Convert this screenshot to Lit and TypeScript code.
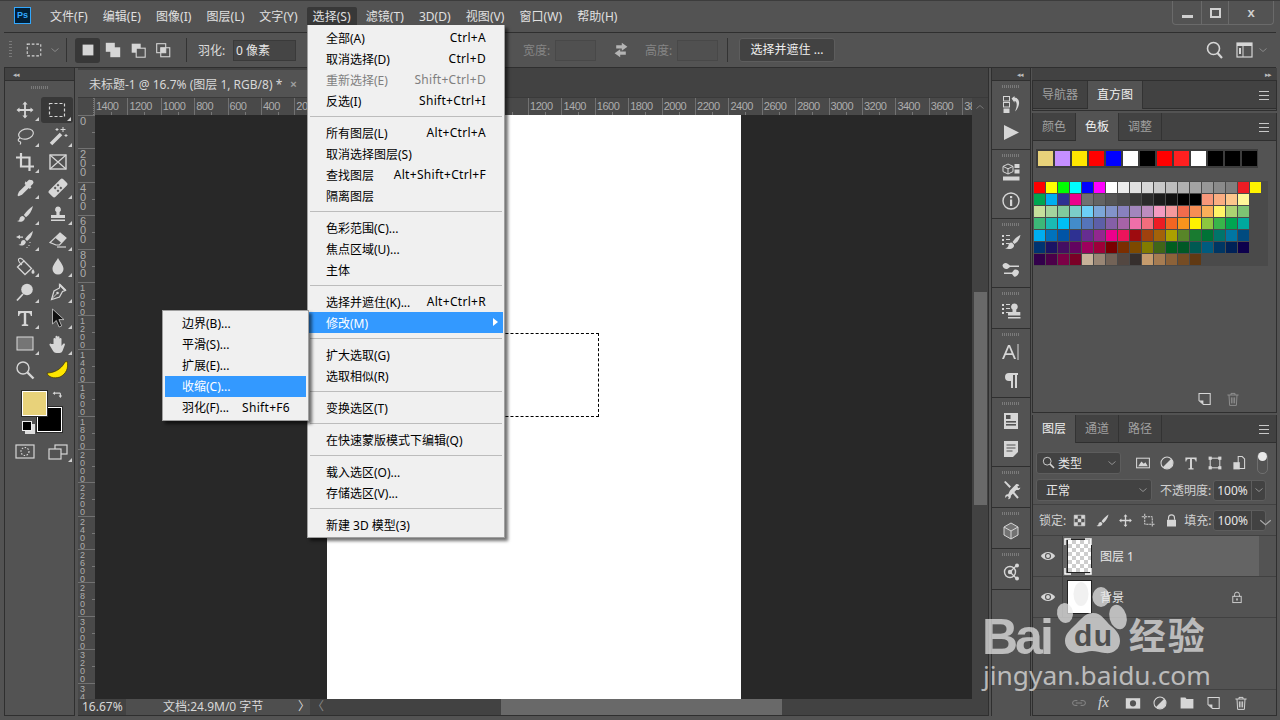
import { LitElement, html, css, svg } from 'lit';
import { customElement } from 'lit/decorators.js';

const icons: Record<string, unknown> = {
  move: svg`<path d="M10 1.5l2.6 3h-1.7v4.6h4.6V7.4l3 2.6-3 2.6v-1.7h-4.6v4.6h1.7l-2.6 3-2.6-3h1.7v-4.6H4.5v1.7l-3-2.6 3-2.6v1.7h4.6V4.5H7.4z"/>`,
  marquee: svg`<rect x="2.5" y="3.5" width="15" height="13" fill="none" stroke="currentColor" stroke-width="1.2" stroke-dasharray="3 2"/>`,
  lasso: svg`<ellipse cx="11" cy="8" rx="7.5" ry="5" transform="rotate(-15 11 8)" fill="none" stroke="currentColor" stroke-width="1.2"/><path d="M5 12c-2 1-2.5 3-.5 3.5 1.5.4 1.5 1.5.5 3" fill="none" stroke="currentColor" stroke-width="1.2"/>`,
  wand: svg`<path d="M3 18L13 8" stroke="currentColor" stroke-width="3.6" fill="none"/><path d="M15 1v5M12.5 3.5h5M9 2v3M7.5 3.5h3M18 8v3M16.5 9.5h3" stroke="currentColor" stroke-width="1"/>`,
  crop: svg`<path d="M6 1v13.5h13M1 5.5h13.5V19" fill="none" stroke="currentColor" stroke-width="2.2"/>`,
  frame: svg`<rect x="2" y="3" width="16" height="14" fill="none" stroke="currentColor" stroke-width="1.4"/><path d="M2 3l16 14M18 3L2 17" stroke="currentColor" stroke-width="1.2"/>`,
  dropper: svg`<path d="M15.5 2a2.4 2.4 0 0 1 2.3 4l-2.3 2.3 1 1-1.7 1.7-1-1-6.8 6.8-3.5 1.4-1-1 1.4-3.5 6.8-6.8-1-1L10.4 3.2l1 1L13.7 2c.5-.2 1.2-.2 1.8 0z"/>`,
  bandage: svg`<g transform="rotate(-45 10 10)"><rect x="0" y="5.5" width="20" height="9" rx="2"/><rect x="7" y="7" width="2" height="2" fill="#535353"/><rect x="11" y="7" width="2" height="2" fill="#535353"/><rect x="7" y="11" width="2" height="2" fill="#535353"/><rect x="11" y="11" width="2" height="2" fill="#535353"/></g>`,
  brush: svg`<path d="M18 2c-3 2-7 5.5-9.2 9l2.2 2.2C14 11 17 7 18 2z"/><path d="M7.8 12C5.8 12 4.5 13.5 4.5 15c0 1-1 2-2.5 2 2 1.5 6.5 1 7.7-2 .4-1.2-.2-2.2-1.9-3z"/>`,
  stamp: svg`<path d="M10 2.5a3 3 0 0 1 1.6 5.5V11h5.4v3H3v-3h5.4V8A3 3 0 0 1 10 2.5z"/><rect x="3" y="15.5" width="14" height="1.5"/>`,
  hbrush: svg`<path d="M18 1c-3 2-6 5-8 8l2 2c3-2 5-5 6-10z"/><path d="M9 10c-2 0-3 1.3-3 2.7 0 1-.8 2-2.5 2 2 1.5 6 1 7.2-2 .3-1-.1-2-1.7-2.7z"/><path d="M1 7l4-2v1.4h3v1.3H5V9z"/><path d="M15 12v1M14 15v1M12 17v1" stroke="currentColor" stroke-width="1"/>`,
  eraser: svg`<path d="M12 3l6 5-6.5 7H8L2 12.5z" fill="none" stroke="currentColor" stroke-width="1.2"/><path d="M12 3l6 5-4.5 5-6-5z"/><path d="M9 17h9" stroke="currentColor" stroke-width="1.2"/>`,
  bucket: svg`<path d="M9 5l7.5 7.5L10 18.5 2.5 11z" fill="none" stroke="currentColor" stroke-width="1.3"/><path d="M9 5C7 2 4 1.5 3.5 3.5S6 8 7 9" fill="none" stroke="currentColor" stroke-width="1.1"/><path d="M18 13c1 1.5 1.5 2.4 1.5 3.2a1.5 1.5 0 0 1-3 0c0-.8.5-1.7 1.5-3.2z"/>`,
  drop: svg`<path d="M10 2c2.7 4.6 5.5 7.5 5.5 11a5.5 5.5 0 0 1-11 0C4.5 9.5 7.3 6.6 10 2z"/>`,
  dodge: svg`<circle cx="12" cy="7.5" r="5.8"/><path d="M8 12L2 18.5" stroke="currentColor" stroke-width="1.8"/>`,
  pen: svg`<path d="M11.5 2.5l6 6-3 1-3 5.5-8 2.5 2.5-8.5 5.5-3z" fill="none" stroke="currentColor" stroke-width="1.2"/><path d="M3.5 17l5-5" stroke="currentColor"/><circle cx="9.5" cy="11" r="1.3"/><path d="M11.5 2.5l6 6" stroke="currentColor" stroke-width="2"/>`,
  type: svg`<path d="M3 3h14v5h-1.2c-.3-2-1-3-3-3H11.2v10.5c0 .8.5 1 2 1V18H6.8v-1.5c1.5 0 2-.2 2-1V5H7.2c-2 0-2.7 1-3 3H3z"/>`,
  arrow: svg`<path d="M4.5 1v15l3.8-3.5 2.8 6.5 2.6-1.1-2.8-6.3h5.1z" fill="#111" stroke="#cfcfcf" stroke-width=".8"/>`,
  rect: svg`<rect x="2" y="3" width="16" height="13" fill="#757575" stroke="#dcdcdc" stroke-width="1"/>`,
  hand: svg`<path d="M5.5 10V5a1 1 0 0 1 2 0v4V2.8a1 1 0 0 1 2 0V9V3.2a1 1 0 0 1 2 0V9V5a1 1 0 0 1 2 0v7l1.7-2.2a1 1 0 0 1 1.7 1L14.5 17c-.6 1-1.5 2-3 2H8.5c-2 0-3-1-4-3L1.5 11a1 1 0 0 1 1.7-1z"/>`,
  zoom: svg`<circle cx="8" cy="8" r="6" fill="none" stroke="currentColor" stroke-width="1.4"/><path d="M12.5 12.5L18.5 18.5" stroke="currentColor" stroke-width="2.4"/>`,
  swap: svg`<path d="M1 7l4-3v2h7c2 0 3 1 3 3v2h2l-3 4-3-4h2V9c0-.8-.3-1-1-1H5v2z"/>`,
  history: svg`<rect x="2.5" y="2.5" width="6" height="4.5" fill="none" stroke="currentColor"/><rect x="2.5" y="8.5" width="6" height="4.5" fill="none" stroke="currentColor"/><rect x="2.5" y="14.5" width="6" height="4.5"/><path d="M10.5 4.5l3-2.5v1.6c3.5.2 5 3 4.5 6.5-.4 3-2 5.5-4 7.5 1-2.4 1.8-5 1.7-7.2 0-2-.8-3.3-2.2-3.5v1.8z"/>`,
  play: svg`<path d="M3 3l15 7.5L3 18z"/>`,
  cube: svg`<path d="M7 1l5 2.4v5.2L7 11 2 8.6V3.4z" fill="none" stroke="currentColor"/><path d="M2 3.4l5 2.4 5-2.4M7 5.8V11" fill="none" stroke="currentColor"/><rect x="13.5" y="1" width="5" height="4"/><rect x="13.5" y="6.5" width="5" height="4"/><rect x="2" y="13.5" width="16.5" height="4"/>`,
  info: svg`<circle cx="10" cy="10" r="8" fill="none" stroke="currentColor" stroke-width="1.4"/><rect x="9" y="8.5" width="2.2" height="6.5"/><rect x="9" y="5" width="2.2" height="2.2"/>`,
  bpreset: svg`<rect x="1" y="3" width="2" height="2"/><rect x="1" y="7" width="2" height="2"/><rect x="1" y="11" width="2" height="2"/><path d="M5 3.5h4M5 7.5h4M5 11.5h3" stroke="currentColor"/><path d="M19.5 3c-3 1-6 4-8 7l2 2c3-1.5 5-5 6-9z"/><path d="M10.5 10.5c-2 0-3 1.3-3 2.7 0 1.3-1.5 2.8-3.5 3 3 1.5 8 1 9-2 .3-1.5-.8-3-2.5-3.7z"/>`,
  bsettings: svg`<path d="M1.5 5.5C2 3 5 2 7 4l2 1.5h9V7H9L7 8.5C5 10 2 8.5 1.5 5.5z"/><path d="M18 12c-.5 3-3 5.5-5 4.5L11 14H3v-1.5h8l2-2.5c2-1 4.5 0 5 2z"/>`,
  clone: svg`<rect x="1" y="3" width="2" height="2"/><rect x="1" y="7" width="2" height="2"/><rect x="1" y="11" width="2" height="2"/><path d="M5 3.5h4M5 7.5h4M5 11.5h2" stroke="currentColor"/><path d="M13.5 2.5a3.3 3.3 0 0 1 1.8 6V11h4v3.5H7V11h4.5V8.5a3.3 3.3 0 0 1 2-6z"/><rect x="7" y="16" width="12.5" height="1.5"/>`,
  char: svg`<path d="M1 17L7 3h2l6 14h-2l-1.7-4H4.7L3 17zM5.400 11.200h5.200L8 5z"/><rect x="16.5" y="2" width="1" height="16"/>`,
  para: svg`<path d="M8 3h9v2h-1v13h-2V5h-2v13h-2v-7H8a4 4 0 0 1 0-8z"/>`,
  lib: svg`<path d="M3 2h14v16H3z"/><rect x="5" y="4" width="4.5" height="4" fill="#535353"/><rect x="5" y="10" width="10" height="1.6" fill="#535353"/><rect x="5" y="13" width="10" height="1.6" fill="#535353"/>`,
  note: svg`<path d="M3 2h14v11l-5 5H3z"/><path d="M5.5 6h9M5.5 9h9M5.5 12h6" stroke="#535353"/>`,
  tools: svg`<path d="M3 2l5.5 6L10 6.500 4.500 1zM9 10.500L15 4.200c1.200-.8 3 0 3.300 1.400l-2 .9 1 1.700 2-.7c0 1.700-1.800 3.200-4 2.400L9.800 15.800c.5 2-.9 3.500-2.700 3.500l.7-2.200-1.700-1-1.600 1.800C3.500 16 5 13.800 7.200 14.300z" fill-rule="evenodd"/><path d="M11 11l6 7" stroke="currentColor" stroke-width="2"/>`,
  box: svg`<path d="M10 2l7 4v8l-7 4-7-4V6z" fill="#737373" stroke="currentColor"/><path d="M3 6l7 4 7-4M10 10v8" fill="none" stroke="currentColor"/>`,
  measure: svg`<circle cx="9" cy="10" r="5.5" fill="none" stroke="currentColor" stroke-width="1.4"/><circle cx="9" cy="10" r="2.2"/><path d="M9 10l7-7M9 10l7 7" stroke="currentColor" stroke-width="1.3"/><circle cx="16" cy="3.5" r="2"/><circle cx="16" cy="16.5" r="2"/>`,
  search: svg`<circle cx="8.5" cy="8.5" r="6" fill="none" stroke="currentColor" stroke-width="1.6"/><path d="M12.5 13l4.5 5" stroke="currentColor" stroke-width="2.2"/>`,
  workspace: svg`<rect x="2" y="3" width="15" height="14" fill="none" stroke="currentColor" stroke-width="1.2"/><rect x="2" y="3" width="15" height="3"/><path d="M8 6v11" stroke="currentColor"/><rect x="4" y="8" width="2" height="6"/>`,
  chev: svg`<path d="M3 7l7 6 7-6" fill="none" stroke="currentColor" stroke-width="1.5"/>`,
  swapH: svg`<path d="M11 1l7 5-7 5V8H4V4h7z"/><path d="M9 9l-7 5 7 5v-3h7v-4H9z"/>`,
  sqA: svg`<rect x="4" y="4" width="12" height="12"/>`,
  sqB: svg`<rect x="2" y="2" width="10" height="10"/><rect x="7" y="7" width="11" height="11"/>`,
  sqC: svg`<rect x="3" y="3" width="10" height="10"/><rect x="8" y="8" width="10" height="10" fill="#535353" stroke="currentColor" stroke-width="1.2"/>`,
  sqD: svg`<rect x="3" y="3" width="10" height="10" fill="none" stroke="currentColor" stroke-width="1.2"/><rect x="7.5" y="7.5" width="10" height="10" fill="none" stroke="currentColor" stroke-width="1.2"/><rect x="7.5" y="7.5" width="5.5" height="5.5"/>`,
  qmask: svg`<rect x="1" y="3" width="18" height="13" fill="none" stroke="currentColor" stroke-width="1.2"/><circle cx="10" cy="9.5" r="4" fill="none" stroke="currentColor" stroke-width="1.2" stroke-dasharray="1.5 1.5"/>`,
  screen: svg`<rect x="7" y="3" width="12" height="9" fill="none" stroke="currentColor" stroke-width="1.2"/><rect x="1" y="7" width="12" height="10" fill="#535353" stroke="currentColor" stroke-width="1.2"/>`,
  newp: svg`<path d="M2.5 3h14v14H8l-5.5-5z" fill="none" stroke="currentColor" stroke-width="1.3"/><path d="M3 12h5v5z"/>`,
  trash: svg`<path d="M3 5h14M7.5 5V3h5v2M5 5l.8 13h8.400L15 5M8 8v7.500M10 8v7.500M12 8v7.500" fill="none" stroke="currentColor" stroke-width="1.2"/>`,
  eye: svg`<path d="M1 10c2.5-3.5 5.5-5 9-5s6.500 1.500 9 5c-2.500 3.500-5.500 5-9 5s-6.500-1.500-9-5z"/><circle cx="10" cy="10" r="3.8" fill="#535353"/><circle cx="10" cy="10" r="2.4"/>`,
  lock: svg`<path d="M6 9V6.5a4 4 0 0 1 8 0V9" fill="none" stroke="currentColor" stroke-width="1.5"/><rect x="4" y="9" width="12" height="9"/>`,
  lockO: svg`<path d="M6.5 9V6.5a3.5 3.5 0 0 1 7 0V9" fill="none" stroke="currentColor" stroke-width="1.3"/><rect x="4" y="9" width="12" height="9" fill="none" stroke="currentColor" stroke-width="1.3"/><rect x="9" y="12" width="2" height="3"/>`,
  image: svg`<rect x="2" y="4" width="16" height="12" fill="none" stroke="currentColor" stroke-width="1.3"/><path d="M4 14l4-6 3 3 2-2 3 5z"/>`,
  adjust: svg`<circle cx="10" cy="10" r="7.5" fill="none" stroke="currentColor" stroke-width="1.3"/><path d="M15.3 4.7A7.5 7.5 0 0 1 4.7 15.3z"/>`,
  shape: svg`<rect x="4" y="4" width="12" height="12" fill="none" stroke="currentColor" stroke-width="1.3"/><rect x="2" y="2" width="4" height="4"/><rect x="14" y="2" width="4" height="4"/><rect x="2" y="14" width="4" height="4"/><rect x="14" y="14" width="4" height="4"/>`,
  smart: svg`<path d="M9 2h5l3 3v12H9z" fill="none" stroke="currentColor" stroke-width="1.3"/><rect x="3" y="9" width="8" height="9"/>`,
  check: svg`<path d="M3 3h14v14H3z" fill="none" stroke="currentColor"/><path d="M3 3h4.7v4.7H3zM12.3 3H17v4.7h-4.7zM7.7 7.7h4.6v4.6H7.7zM3 12.3h4.7V17H3zM12.3 12.3H17V17h-4.7z"/>`,
  artboard: svg`<path d="M5 1v14h14M1 5h14v14" fill="none" stroke="currentColor" stroke-width="1.3" stroke-dasharray="3 1"/>`,
  link: svg`<path d="M8 7H5a3 3 0 0 0 0 6h3M12 7h3a3 3 0 0 1 0 6h-3M6 10h8" fill="none" stroke="currentColor" stroke-width="1.2"/>`,
  maskI: svg`<rect x="1" y="4" width="18" height="13"/><circle cx="10" cy="10.5" r="3.8" fill="#535353"/>`,
  folder: svg`<path d="M2 3h6l1.5 2H18v12H2z"/>`,
};

const ic = (name: string, cls = '') =>
  html`<svg class="ic ${cls}" viewBox="0 0 20 20" fill="currentColor">${icons[name]}</svg>`;

const MENUBAR = ['文件(F)', '编辑(E)', '图像(I)', '图层(L)', '文字(Y)', '选择(S)', '滤镜(T)', '3D(D)', '视图(V)', '窗口(W)', '帮助(H)'];

const TOOLS = [
  ['move', 'more'], ['marquee', 'sel more'], ['lasso', 'more'], ['wand', 'more'],
  ['crop', 'more'], ['frame', ''], ['dropper', 'more'], ['bandage', 'more'],
  ['brush', 'more'], ['stamp', 'more'], ['hbrush', 'more'], ['eraser', 'more'],
  ['bucket', 'more'], ['drop', 'more'], ['dodge', 'more'], ['pen', 'more'],
  ['type', 'more'], ['arrow', 'more'], ['rect', 'more'], ['hand', 'more'], ['zoom', ''],
];

type Item = { t?: string; k?: string; off?: boolean; on?: boolean; sub?: boolean };

const MAIN_MENU: Item[] = [
  { t: '全部(A)', k: 'Ctrl+A' }, { t: '取消选择(D)', k: 'Ctrl+D' }, { t: '重新选择(E)', k: 'Shift+Ctrl+D', off: true }, { t: '反选(I)', k: 'Shift+Ctrl+I' }, {},
  { t: '所有图层(L)', k: 'Alt+Ctrl+A' }, { t: '取消选择图层(S)' }, { t: '查找图层', k: 'Alt+Shift+Ctrl+F' }, { t: '隔离图层' }, {},
  { t: '色彩范围(C)...' }, { t: '焦点区域(U)...' }, { t: '主体' }, {},
  { t: '选择并遮住(K)...', k: 'Alt+Ctrl+R' }, { t: '修改(M)', on: true, sub: true }, {},
  { t: '扩大选取(G)' }, { t: '选取相似(R)' }, {},
  { t: '变换选区(T)' }, {},
  { t: '在快速蒙版模式下编辑(Q)' }, {},
  { t: '载入选区(O)...' }, { t: '存储选区(V)...' }, {},
  { t: '新建 3D 模型(3)' },
];

const SUB_MENU: Item[] = [
  { t: '边界(B)...' }, { t: '平滑(S)...' }, { t: '扩展(E)...' }, { t: '收缩(C)...', on: true }, { t: '羽化(F)...', k: 'Shift+F6' },
];

const RECENT = ['#e8d27a', '#c58fff', '#ffe600', '#ff0000', '#0000ff', '#ffffff', '#000000', '#ff0000', '#ff2020', '#ffffff', '#000000', '#000000', '#000000'];

const SWATCHES = [
  '#ff0000 #ffff00 #00ff00 #00ffff #0000ff #ff00ff #ffffff #ebebeb #e1e1e1 #d7d7d7 #c8c8c8 #bdbdbd #b0b0b0 #a4a4a4 #979797 #8a8a8a #7f7f7f #ed1c24 #fff200',
  '#00a651 #00aeef #2e3192 #ec008c #707070 #636363 #555555 #4a4a4a #3a3a3a #2b2b2b #1c1c1c #111111 #000000 #000000 #f7977a #fbad82 #fdc68c #fff799',
  '#c6df9c #a4d49d #81ca9d #7bcdc9 #6ccff7 #7ca6d8 #8293ca #8881be #a286bd #bc8dbf #f49bc1 #f5999d #f16c4d #f68e55 #fbaf5a #fff467 #acd372 #7dc473',
  '#3cb878 #1abbb4 #00bff3 #438cca #5574b9 #5d5fa8 #855fa8 #a763a8 #ee6fa9 #f26d7d #ed1c24 #f26522 #f7941d #fff200 #8dc63f #39b54a #00a651 #00a99d',
  '#00aeef #0072bc #0054a6 #2e3192 #662d91 #92278f #ec008c #ed145b #9e0b0f #a0410d #a36209 #aba000 #588528 #197b30 #007236 #00746b #0076a3 #004b80',
  '#003471 #1b1464 #440e62 #630460 #9e005d #9e0039 #790000 #7b2e00 #7d4900 #827b00 #406618 #005e20 #005826 #005952 #005b7f #003663 #002157 #0d004c',
  '#32004b #4b0049 #7b0046 #7a0026 #c7b299 #998675 #736357 #534741 #362f2d #c69c6d #a67c52 #8c6239 #754c24 #603913',
].map((r) => r.split(' '));

const DOCK = [
  ['history', 'play'], ['cube', 'info'], ['bpreset', 'bsettings'], ['clone'], ['char', 'para'], ['lib', 'note'], ['tools'], ['box'], ['measure'],
];

// labels from 0 to 1000 sit under the open menu, so they stay empty
const H_RULER: { v: number; hidden: boolean }[] = [];
for (let v = 1400; v >= 200; v -= 200) H_RULER.push({ v, hidden: false });
for (let v = 0; v <= 3800; v += 200) H_RULER.push({ v, hidden: v <= 1000 });
const V_RULER: number[] = [];
for (let v = 0; v <= 3400; v += 200) V_RULER.push(v);

@customElement('app-root')
export class AppRoot extends LitElement {
  static styles = css`
    :host {
      display: block;
      width: 1280px;
      height: 720px;
      overflow: hidden;
      font-family: "Noto Sans", "Noto Sans CJK SC", sans-serif;
      font-size: 12px;
      color: #e0e0e0;
    }
    .app {
      position: relative;
      width: 1280px;
      height: 720px;
      background: #535353;
      display: flex;
      flex-direction: column;
      overflow: hidden;
    }
    .ic { width: 20px; height: 20px; display: block; color: #d6d6d6; flex: none; }

    /* menu bar */
    .bar { height: 32px; display: flex; align-items: flex-start; flex: none; border-top: 1px solid #3c3c3c; box-sizing: border-box; }
    .logo {
      width: 15px; height: 15px; margin: 6px 0 0 14px; border: 1px solid #31a8ff; background: #001e36;
      color: #31a8ff; font: bold 9px/15px "Liberation Sans", sans-serif; text-align: center;
    }
    .menus { display: flex; gap: 3px; margin: 6px 0 0 13px; }
    .menus span { padding: 0 6px; height: 20px; line-height: 19px; white-space: nowrap; width: max-content; border-radius: 2px; letter-spacing: .06px; }
    .menus span.open { background: #383838; }
    .win {
      margin-left: auto; margin-right: 6px; width: 102px; height: 24px; display: flex; box-sizing: border-box;
      border: 1px solid #6a6a6a; border-top: 0; border-radius: 0 0 4px 4px;
    }
    .win i { display: flex; align-items: center; justify-content: center; border-left: 1px solid #6a6a6a; font-style: normal; }
    .win i:first-child { border: 0; width: 28px; }
    .win i:nth-child(2) { width: 26px; }
    .win i:last-child { flex: 1; font: bold 13px "Liberation Sans", sans-serif; color: #cfcfcf; }
    .win .min { width: 11px; height: 3px; background: #cfcfcf; margin-top: 7px; }
    .win .max { width: 7px; height: 6px; border: 2px solid #cfcfcf; }

    /* options bar */
    .opts {
      height: 36px; flex: none; display: flex; align-items: center; box-sizing: border-box;
      border-top: 1px solid #2f2f2f; border-bottom: 1px solid #2f2f2f; margin: 0 4px; padding-left: 5px; color: #dcdcdc;
    }
    .grip { width: 3px; height: 18px; background: repeating-linear-gradient(#7a7a7a 0 1px, transparent 1px 3px); flex: none; }
    .sep { width: 1px; height: 24px; background: #333; flex: none; }
    .opt-marquee { margin-left: 13px; width: 18px; height: 18px; }
    .opt-chev { margin-left: 7px; width: 10px; height: 10px; color: #999; }
    .sep-a { margin: 0 8px 0 6px; }
    .sq { width: 25px; height: 25px; display: flex; align-items: center; justify-content: center; flex: none; box-sizing: border-box; }
    .sq .ic { width: 18px; height: 18px; }
    .sq.on { background: #383838; border-radius: 3px; }
    .sep-b { margin: 0 11px; }
    .feather { width: 35px; white-space: nowrap; }
    .field {
      box-sizing: border-box; height: 21px; background: #454545; border: 1px solid #3a3a3a; flex: none; line-height: 19px; padding-left: 2px; color: #e6e6e6; white-space: nowrap;
    }
    .f-feather { width: 63px; }
    .dim { color: #858585; white-space: nowrap; }
    .f-dim { width: 41px; background: #505050; border-color: #484848; margin-left: 4px; }
    .w-label { margin-left: 227px; width: 28px; }
    .swap { margin-left: 17px; width: 16px; height: 16px; color: #b4b4b4; }
    .h-label { margin-left: 16px; width: 28px; }
    .sep-c { margin: 0 11px 0 9px; }
    .refine {
      width: 96px; height: 24px; background: #424242; border: 1px solid #5d5d5d; border-radius: 3px; box-sizing: border-box; text-align: center; line-height: 21px; color: #f0f0f0; white-space: nowrap;
    }
    .opt-search { margin-left: auto; width: 20px; height: 20px; }
    .opt-ws { margin-left: 10px; width: 20px; height: 20px; }
    .opt-chev2 { margin: 0 8px 0 3px; width: 10px; height: 10px; color: #999; }

    /* main */
    .main { flex: 1; display: flex; min-height: 0; padding-bottom: 4px; box-sizing: border-box; }
    .strip { height: 12px; background: #424242; display: flex; align-items: center; font-size: 7px; color: #bbb; letter-spacing: -1px; flex: none; border-bottom: 1px solid #2f2f2f; }

    /* left toolbar */
    .left { width: 71px; margin: 0 3px 0 4px; display: flex; flex-direction: column; flex: none; border-right: 1px solid #2f2f2f; border-left: 1px solid #2f2f2f; border-bottom: 1px solid #2f2f2f; box-sizing: border-box; }
    .left .strip { padding-left: 8px; }
    .left-grip { height: 3px; margin: 5px auto 8px; width: 18px; background: repeating-linear-gradient(90deg, #7a7a7a 0 1px, transparent 1px 2px); flex: none; }
    .tools { display: grid; grid-template-columns: 33px 33px; grid-auto-rows: 26px; padding-left: 3px; }
    .tool { position: relative; display: flex; align-items: center; justify-content: center; box-sizing: border-box; }
    .tool.sel { background: #383838; border-radius: 3px; margin-right: 1px; }
    .tool.more::after {
      content: ''; position: absolute; right: 2px; bottom: 2px; width: 0; height: 0;
      border-left: 4px solid transparent; border-bottom: 4px solid #cfcfcf;
    }
    .banana { width: 24px; height: 18px; }
    .colors { position: relative; height: 46px; margin: 6px 0 0 0; flex: none; }
    .fg, .bg { position: absolute; box-sizing: border-box; width: 25px; height: 25px; border: 1px solid #fff; box-shadow: 0 0 0 1px #2a2a2a; }
    .fg { left: 17px; top: 2px; background: #e8d27a; z-index: 1; }
    .bg { left: 32px; top: 18px; background: #000; }
    .cswap { position: absolute; left: 47px; top: 0; width: 12px; height: 12px; }
    .cdef { position: absolute; left: 17px; top: 32px; width: 10px; height: 10px; background: #000; border: 1px solid #eee; box-sizing: border-box; box-shadow: 3px 3px 0 #ddd; }
    .modes { display: grid; grid-template-columns: 33px 33px; padding-left: 3px; margin-top: 5px; flex: none; }
    .modes div { position: relative; display: flex; justify-content: center; height: 24px; align-items: center; }

    /* document */
    .doc { width: 911px; flex: none; display: flex; flex-direction: column; border-right: 1px solid #2f2f2f; box-sizing: border-box; }
    .tabs { height: 29px; background: #424242; flex: none; display: flex; align-items: flex-end; }
    .tab { width: 232px; height: 27px; background: #535353; display: flex; align-items: center; padding: 0 0 0 11px; box-sizing: border-box; white-space: nowrap; color: #d8d8d8; }
    .tab b { margin-left: 8px; font: bold 11px "Liberation Sans", sans-serif; color: #a0a0a0; }
    .hruler { height: 18px; flex: none; background: #494949; display: flex; border-top: 1px solid #3a3a3a; box-sizing: border-box; }
    .corner { width: 15px; flex: none; background: #494949; border-right: 1px dotted #777; }
    .hticks { flex: 1; min-width: 0; display: flex; overflow: hidden; }
    .hend { width: 16px; flex: none; background: #424242; display: flex; align-items: center; justify-content: center; }
    .hend .ic { width: 10px; height: 10px; color: #8a8a8a; transform: scaleY(-1); }
    .hcell {
      width: 33.4px; flex: none; box-sizing: border-box; border-left: 1px solid #717171; padding-left: 1px;
      font: 11px/17px "Liberation Sans", sans-serif; letter-spacing: -.5px; color: #adadad; position: relative;
    }
    .hcell::after { content: ''; position: absolute; left: 16px; bottom: 0; width: 1px; height: 3px; background: #777; }
    .mid { flex: 1; min-height: 0; display: flex; }
    .vruler { width: 17px; flex: none; background: #494949; overflow: hidden; }
    .vcell {
      height: 33.4px; box-sizing: border-box; border-top: 1px solid #717171; padding: 1px 0 0 2px; position: relative;
      font: 11px/9px "Liberation Sans", sans-serif; color: #adadad; display: flex; flex-direction: column;
    }
    .vcell.long { font-size: 9px; line-height: 8px; }
    .vcell::after { content: ''; position: absolute; right: 0; top: 16px; width: 3px; height: 1px; background: #777; }
    .canvas { flex: 1; background: #282828; position: relative; overflow: hidden; }
    .page { position: absolute; left: 232px; top: 0; width: 414px; height: 100%; background: #fff; }
    .ants { position: absolute; left: 340px; top: 218px; width: 164px; height: 84px; box-sizing: border-box; border: 1px dashed #000; }
    .vscroll { width: 16px; flex: none; background: #424242; padding: 177px 1px 0 2px; box-sizing: border-box; }
    .vscroll div { height: 213px; background: #696969; }
    .status { height: 17px; flex: none; display: flex; background: #424242; line-height: 16px; color: #d8d8d8; border-bottom: 1px solid #2f2f2f; box-sizing: border-box; }
    .pct { width: 48px; padding-left: 4px; box-sizing: border-box; flex: none; }
    .docinfo { width: 184px; flex: none; background: #4e4e4e; display: flex; justify-content: space-between; padding: 0 0 0 37px; box-sizing: border-box; white-space: nowrap; }
    .hscroll { flex: 1; display: flex; color: #8a8a8a; padding-left: 2px; }
    .hthumb { width: 281px; background: #696969; margin-left: 177px; }

    /* dock */
    .dock { width: 40px; margin: 0 1px 0 2px; flex: none; display: flex; flex-direction: column; border-left: 1px solid #2f2f2f; border-right: 1px solid #2f2f2f; box-sizing: border-box; }
    .dock .strip { justify-content: flex-end; padding-right: 7px; }
    .dgroup { position: relative; padding: 9px 0 3px; border-bottom: 1px solid #2f2f2f; flex: none; }
    .dgroup::before {
      content: ''; position: absolute; left: 10px; top: 4px; width: 18px; height: 3px;
      background: repeating-linear-gradient(90deg, #7a7a7a 0 1px, transparent 1px 2px);
    }
    .dgroup div { height: 28px; display: flex; align-items: center; justify-content: center; }

    /* panels */
    .panels { width: 245px; margin-right: 3px; flex: none; display: flex; flex-direction: column; }
    .panels .strip { justify-content: flex-end; padding-right: 6px; }
    .pgroup { display: flex; flex-direction: column; border: 1px solid #2f2f2f; box-sizing: border-box; flex: none; margin-bottom: 2px; border-top: 0; }
    .ptabs { height: 28px; flex: none; display: flex; background: #424242; border-bottom: 1px solid #2f2f2f; box-sizing: border-box; align-items: stretch; }
    .ptab { padding: 0 9px; line-height: 27px; color: #a0a0a0; border-right: 1px solid #333; white-space: nowrap; }
    .ptab.on { background: #535353; color: #f0f0f0; margin-bottom: -1px; height: 28px; }
    .burger { margin-left: auto; width: 10px; height: 7px; margin: 10px 7px 0 auto; border-top: 1px solid #c8c8c8; border-bottom: 1px solid #c8c8c8; position: relative; }
    .burger::after { content: ''; position: absolute; left: 0; right: 0; top: 3px; height: 1px; background: #c8c8c8; }
    .g-nav { height: 30px; }
    .g-swatch { height: 300px; }
    .recent { display: flex; gap: 2px; margin: 8px 0 0 3px; width: 222px; box-sizing: border-box; padding: 2px; background: #3c3c3c; }
    .recent i { width: 15px; height: 15px; display: block; flex: none; }
    .wells { margin: 13px 8px 0 1px; height: 84px; background: #4a4a4a; padding: 1px 0 0 0; flex: none; }
    .wrow { display: flex; gap: 1px; margin-bottom: 1px; }
    .wrow i { width: 11px; height: 11px; display: block; flex: none; }
    .pfoot { margin-top: auto; height: 26px; flex: none; display: flex; justify-content: flex-end; align-items: center; gap: 12px; padding-right: 35px; }
    .pfoot .ic { width: 16px; height: 16px; }
    .pfoot .faint { color: #8f8f8f; }
    .g-layers { flex: 1; margin-bottom: 0; min-height: 0; }
    .lrow { display: flex; align-items: center; flex: none; box-sizing: border-box; }
    .l-filter { height: 33px; padding: 6px 0 0 3px; }
    .sel-box {
      box-sizing: border-box; background: #424242; border: 1px solid #5d5d5d; border-radius: 3px; display: flex; align-items: center; height: 22px; color: #e6e6e6; flex: none;
    }
    .sel-box .ic:last-child { margin-left: auto; width: 10px; height: 10px; margin-right: 3px; color: #aaa; }
    .s-kind { width: 85px; padding-left: 5px; }
    .s-kind .ic:first-child { width: 13px; height: 13px; margin-right: 3px; }
    .s-icons { display: flex; gap: 8px; margin-left: 14px; }
    .s-icons .ic { width: 16px; height: 16px; }
    .toggle { position: relative; width: 9px; height: 20px; border: 1px solid #6f6f6f; border-radius: 5px; margin-left: 10px; flex: none; }
    .toggle::after { content: ''; position: absolute; left: 0; top: -1px; width: 9px; height: 9px; background: #e8e8e8; border-radius: 50%; }
    .l-blend { height: 29px; padding-left: 3px; border-bottom: 1px solid #414141; }
    .s-blend { width: 116px; padding-left: 9px; }
    .l-text { white-space: nowrap; color: #d0d0d0; }
    .b-op { margin-left: 8px; }
    .num {
      margin-left: 2px; display: flex; width: 53px; height: 21px; box-sizing: border-box; background: #424242; border: 1px solid #5d5d5d; border-radius: 3px; flex: none; line-height: 19px; padding-left: 3px; color: #e6e6e6;
    }
    .num .ic { width: 10px; height: 10px; margin: 4px 1px 0 auto; color: #aaa; }
    .num span { width: 34px; border-right: 1px solid #5d5d5d; flex: none; }
    .l-lock { height: 31px; padding-left: 6px; border-bottom: 1px solid #414141; }
    .l-lock .ic { width: 15px; height: 15px; margin-left: 8px; }
    .l-lock .ic:first-of-type { margin-left: 6px; }
    .fill { margin-left: 5px; }
    .layer { height: 41px; display: flex; border-bottom: 1px solid #414141; box-sizing: border-box; flex: none; }
    .eye { width: 29px; display: flex; align-items: center; justify-content: center; flex: none; }
    .eye .ic { width: 16px; height: 16px; }
    .lbody { width: 197px; flex: none; display: flex; align-items: center; padding-left: 4px; box-sizing: border-box; position: relative; border-left: 1px solid #414141; }
    .layer.on .lbody { background: #646464; }
    .thumb { width: 23px; height: 32px; border: 1px solid #222; flex: none; }
    .checker { background: repeating-conic-gradient(#cdcdcd 0 25%, #fff 0 50%) 0 0 / 8px 8px; }
    .white { background: #fff; }
    .corners { position: absolute; left: 1px; top: 2px; width: 28px; height: 37px; }
    .lname { margin-left: 8px; white-space: nowrap; color: #e8e8e8; }
    .llock { margin-left: auto; margin-right: 15px; width: 14px; height: 14px; }
    .lspace { flex: 1; }
    .lfoot { height: 25px; flex: none; display: flex; align-items: center; justify-content: flex-end; gap: 11px; padding-right: 27px; border-top: 1px solid #414141; }
    .lfoot .ic { width: 16px; height: 16px; }
    .lfoot .faint { color: #8a8a8a; }
    .fx { font: italic 15px "Liberation Serif", serif; color: #d6d6d6; width: 16px; }

    /* popup menus */
    .menu {
      position: absolute; background: #f0f0f0; color: #000; box-sizing: border-box; border: 1px solid #a0a0a0; box-shadow: 3px 3px 3px rgba(0, 0, 0, .55); padding: 2px 1px;
    }
    .m-main { left: 307px; top: 25px; width: 198px; height: 513px; padding-top: 2px; z-index: 2; border-top: 0; }
    .m-sub { left: 162px; top: 310px; width: 147px; height: 111px; z-index: 3; padding: 2px; }
    .mi { height: 21px; display: flex; align-items: center; justify-content: space-between; white-space: nowrap; position: relative; box-sizing: border-box; }
    .mi span:last-child { letter-spacing: .3px; }
    .m-main .mi { padding: 0 17px 0 17px; }
    .m-sub .mi { padding: 0 16px 1px 17px; }
    .mi.off { color: #7f7f7f; }
    .mi.on { background: #3399ff; color: #fff; }
    .mi.sub::after { content: ''; position: absolute; right: 5px; top: 6px; border-left: 5px solid #fff; border-top: 4px solid transparent; border-bottom: 4px solid transparent; }
    .msep { height: 1px; margin: 5px 1px; background: #bcbcbc; }

    /* watermark */
    .mark { position: absolute; left: 981px; top: 580px; width: 240px; height: 115px; z-index: 5; pointer-events: none; color: rgba(235, 235, 235, .7); }
    .mark-top { display: flex; align-items: flex-start; }
    .bai { font: bold 50px/50px "Liberation Sans", sans-serif; letter-spacing: -3px; margin: 32px 0 0 1px; }
    .paw { width: 70px; height: 76px; margin: 0 0 0 6px; display: block; flex: none; overflow: visible; }
    .jy { font: bold 37px/44px "Noto Sans CJK SC", sans-serif; margin: 32px 0 0 2px; white-space: nowrap; letter-spacing: 2px; }
    .url { font: 26.3px/30px "Noto Sans", sans-serif; margin: -2px 0 0 2px; white-space: nowrap; }
  `;

  private menu(items: Item[], cls: string) {
    return html`<div class="menu ${cls}">
      ${items.map((it) =>
        it.t
          ? html`<div class="mi ${it.off ? 'off' : ''} ${it.on ? 'on' : ''} ${it.sub ? 'sub' : ''}"><span>${it.t}</span><span>${it.k ?? ''}</span></div>`
          : html`<div class="msep"></div>`
      )}
    </div>`;
  }

  private banana() {
    return html`<svg class="banana" viewBox="0 0 24 18"><path d="M1 12C7 12 15 9 19 1l2-1c2 7-1 13-7 16-6 2-12 0-13-4z" fill="#ffe600" stroke="#3a3000" stroke-width=".7"/></svg>`;
  }

  render() {
    return html`
      <div class="app">
        <div class="bar">
          <div class="logo">Ps</div>
          <div class="menus">${MENUBAR.map((m, i) => html`<span class=${i === 5 ? 'open' : ''}>${m}</span>`)}</div>
          <div class="win"><i><span class="min"></span></i><i><span class="max"></span></i><i>x</i></div>
        </div>

        <div class="opts">
          <div class="grip"></div>
          ${ic('marquee', 'opt-marquee')}${ic('chev', 'opt-chev')}
          <div class="sep sep-a"></div>
          <div class="sq on">${ic('sqA')}</div>
          <div class="sq">${ic('sqB')}</div>
          <div class="sq">${ic('sqC')}</div>
          <div class="sq">${ic('sqD')}</div>
          <div class="sep sep-b"></div>
          <div class="feather">羽化:</div>
          <div class="field f-feather">0 像素</div>
          <div class="dim w-label">宽度:</div>
          <div class="field f-dim"></div>
          ${ic('swapH', 'swap')}
          <div class="dim h-label">高度:</div>
          <div class="field f-dim"></div>
          <div class="sep sep-c"></div>
          <div class="refine">选择并遮住 ...</div>
          ${ic('search', 'opt-search')}${ic('workspace', 'opt-ws')}${ic('chev', 'opt-chev2')}
        </div>

        <div class="main">
          <div class="left">
            <div class="strip">◂◂</div>
            <div class="left-grip"></div>
            <div class="tools">
              ${TOOLS.map(([n, c]) => html`<div class="tool ${c}">${ic(n)}</div>`)}
              <div class="tool">${this.banana()}</div>
            </div>
            <div class="colors">
              <div class="fg"></div><div class="bg"></div>
              ${ic('swap', 'cswap')}
              <div class="cdef"></div>
            </div>
            <div class="modes"><div>${ic('qmask')}</div><div class="tool more">${ic('screen')}</div></div>
          </div>

          <div class="doc">
            <div class="tabs"><div class="tab">未标题-1 @ 16.7% (图层 1, RGB/8) *<b>×</b></div></div>
            <div class="hruler">
              <div class="corner"></div>
              <div class="hticks">${H_RULER.map((c) => html`<div class="hcell">${c.hidden ? '' : c.v}</div>`)}</div>
              <div class="hend">${ic('chev')}</div>
            </div>
            <div class="mid">
              <div class="vruler">
                ${V_RULER.map((v) => html`<div class="vcell ${v >= 1000 ? 'long' : ''}">${String(v).split('').map((d) => html`<span>${d}</span>`)}</div>`)}
              </div>
              <div class="canvas"><div class="page"></div><div class="ants"></div></div>
              <div class="vscroll"><div></div></div>
            </div>
            <div class="status">
              <div class="pct">16.67%</div>
              <div class="docinfo"><span>文档:24.9M/0 字节</span><span>〉</span></div>
              <div class="hscroll"><span>〈</span><div class="hthumb"></div></div>
            </div>
          </div>

          <div class="dock">
            <div class="strip">◂◂</div>
            ${DOCK.map((g) => html`<div class="dgroup">${g.map((n) => html`<div>${ic(n)}</div>`)}</div>`)}
          </div>

          <div class="panels">
            <div class="strip">▸▸</div>
            <div class="pgroup g-nav">
              <div class="ptabs"><div class="ptab">导航器</div><div class="ptab on">直方图</div><div class="burger"></div></div>
            </div>
            <div class="pgroup g-swatch">
              <div class="ptabs"><div class="ptab">颜色</div><div class="ptab on">色板</div><div class="ptab">调整</div><div class="burger"></div></div>
              <div class="recent">${RECENT.map((c) => html`<i style="background:${c}"></i>`)}</div>
              <div class="wells">
                ${SWATCHES.map((r) => html`<div class="wrow">${r.map((c) => html`<i style="background:${c}"></i>`)}</div>`)}
              </div>
              <div class="pfoot">${ic('newp')}${ic('trash', 'faint')}</div>
            </div>
            <div class="pgroup g-layers">
              <div class="ptabs"><div class="ptab on">图层</div><div class="ptab">通道</div><div class="ptab">路径</div><div class="burger"></div></div>
              <div class="lrow l-filter">
                <div class="sel-box s-kind">${ic('zoom')}类型${ic('chev')}</div>
                <div class="s-icons">${ic('image')}${ic('adjust')}${ic('type')}${ic('shape')}${ic('smart')}</div>
                <div class="toggle"></div>
              </div>
              <div class="lrow l-blend">
                <div class="sel-box s-blend">正常${ic('chev')}</div>
                <div class="l-text b-op">不透明度:</div>
                <div class="num"><span>100%</span>${ic('chev')}</div>
              </div>
              <div class="lrow l-lock">
                <div class="l-text">锁定:</div>
                ${ic('check')}${ic('brush')}${ic('move')}${ic('artboard')}${ic('lock')}
                <div class="l-text fill">填充:</div>
                <div class="num"><span>100%</span>${ic('chev')}</div>
              </div>
              <div class="layer on">
                <div class="eye">${ic('eye')}</div>
                <div class="lbody">
                  <div class="thumb checker"></div>
                  <svg class="corners" viewBox="0 0 28 37" fill="none" stroke="#fff" stroke-width="1.5"><path d="M7 1H1v6M21 1h6v6M1 30v6h6M27 30v6h-6"/></svg>
                  <div class="lname">图层 1</div>
                </div>
              </div>
              <div class="layer">
                <div class="eye">${ic('eye')}</div>
                <div class="lbody">
                  <div class="thumb white"></div>
                  <div class="lname">背景</div>
                  ${ic('lockO', 'llock')}
                </div>
              </div>
              <div class="lspace"></div>
              <div class="lfoot">
                ${ic('link', 'faint')}<span class="fx">fx</span>${ic('maskI')}${ic('adjust')}${ic('folder')}${ic('newp')}${ic('trash')}
              </div>
            </div>
          </div>
        </div>

        ${this.menu(MAIN_MENU, 'm-main')}
        ${this.menu(SUB_MENU, 'm-sub')}

        <div class="mark">
          <div class="mark-top">
            <span class="bai">Bai</span>
            <svg class="paw" viewBox="0 0 70 76" fill="currentColor">
              <ellipse cx="8" cy="33" rx="8" ry="10" transform="rotate(-10 8 33)"/>
              <ellipse cx="24" cy="14" rx="7.5" ry="12"/>
              <ellipse cx="44" cy="17" rx="8.5" ry="10"/>
              <ellipse cx="61" cy="37" rx="8.5" ry="12.5" transform="rotate(-15 61 37)"/>
              <path d="M36 33c9 0 12 8 18 13 5 4 9 8 9 15 0 9-8 13-15 12-5-.6-9-2-13-2s-8 2-14 2C14 73 8 68 8 61c0-7 5-11 9-15 6-5 10-13 19-13z"/>
              <text x="36" y="66" text-anchor="middle" font-family="Liberation Sans, sans-serif" font-size="30" font-weight="bold" fill="#4f4f4f" textLength="38">du</text>
            </svg>
            <span class="jy">经验</span>
          </div>
          <div class="url">jingyan.baidu.com</div>
        </div>
      </div>
    `;
  }
}
